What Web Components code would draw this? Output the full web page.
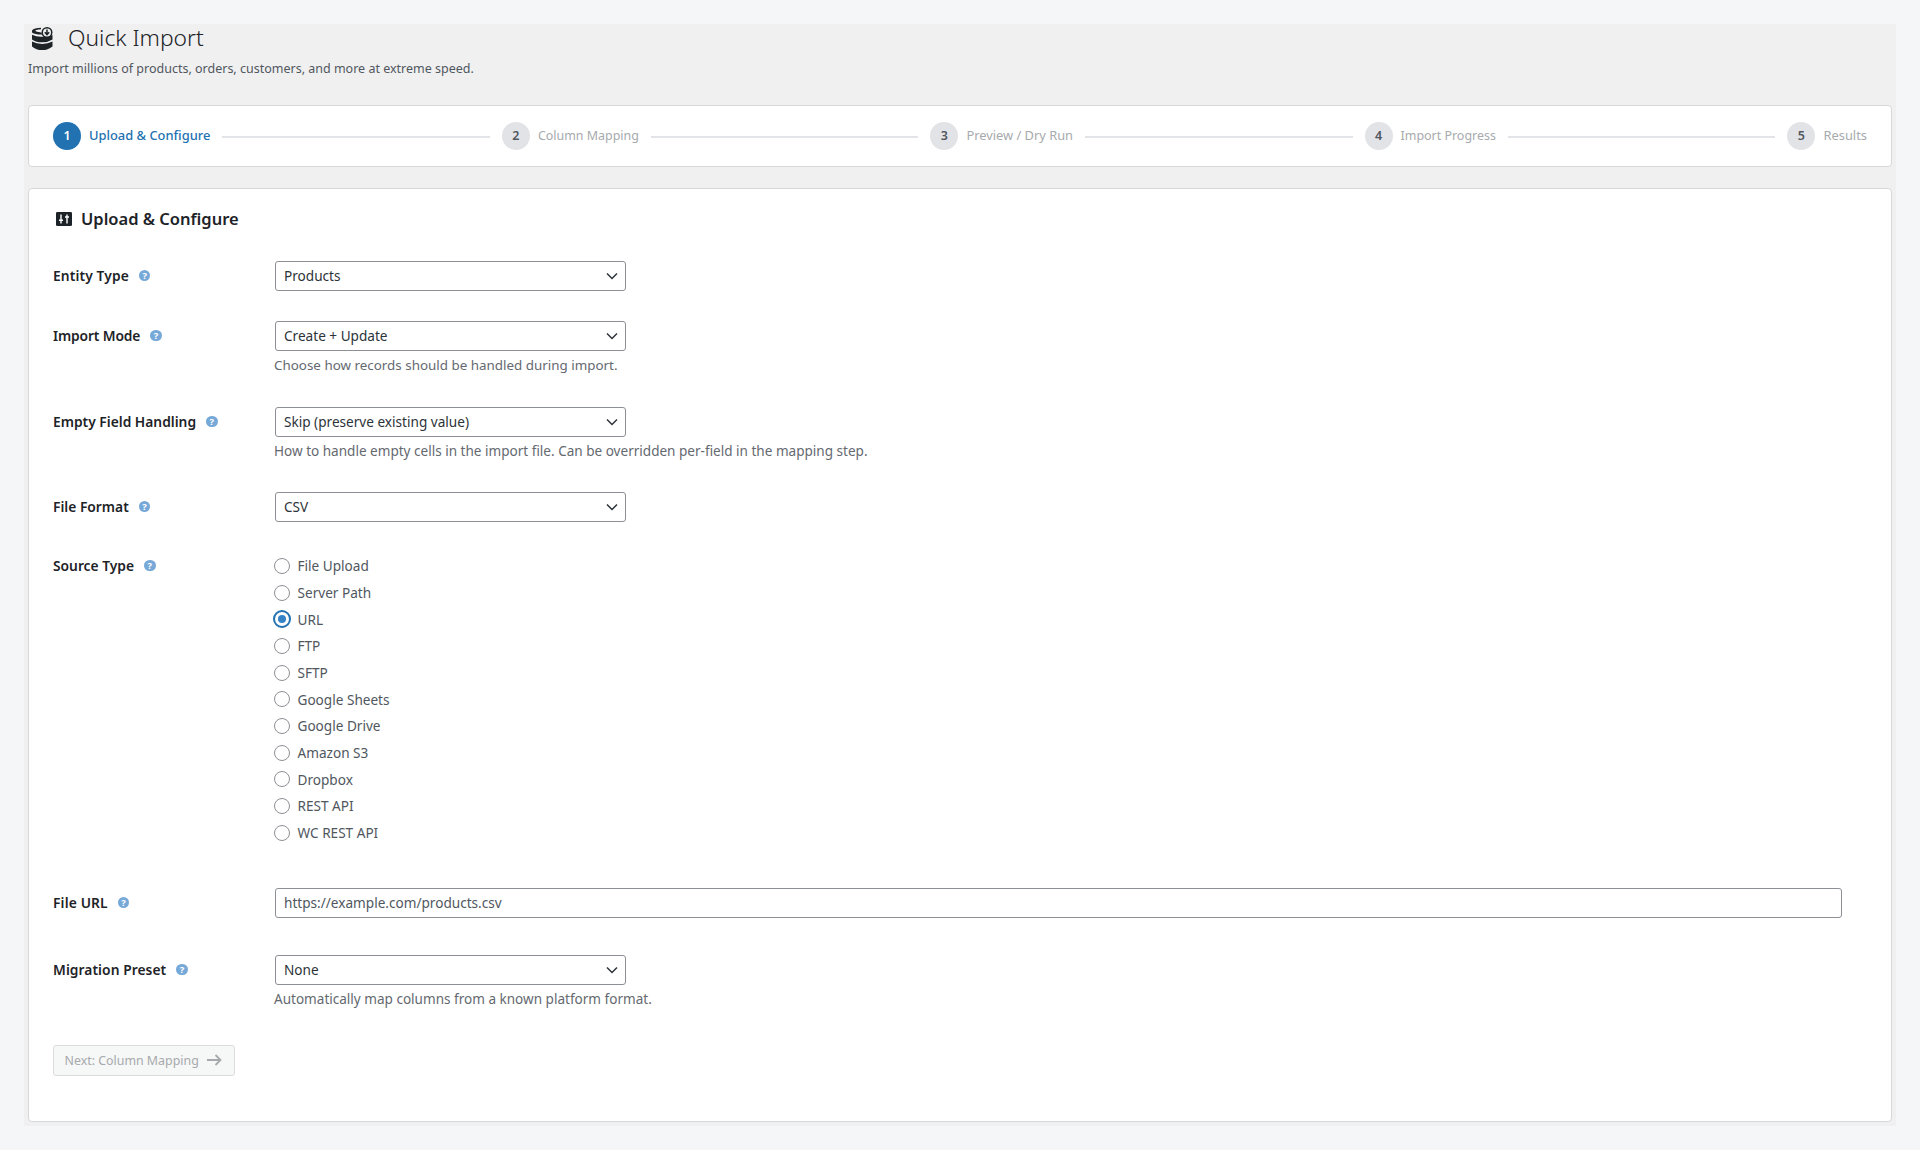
<!DOCTYPE html><html lang="en"><head><meta charset="utf-8"><title>Quick Import</title><style>
html,body{margin:0;padding:0;background:#f5f6f8;font-family:"Noto Sans",sans-serif;color:#1d2327}
body{height:1150px;overflow:hidden}
</style></head><body>
<qi-page>
  <qi-header slot="header" title="Quick Import" sub="Import millions of products, orders, customers, and more at extreme speed."></qi-header>
  <qi-stepper>
    <qi-step num="1" active>Upload &amp; Configure</qi-step>
    <qi-step num="2" style="--fs:12.45px">Column Mapping</qi-step>
    <qi-step num="3" style="--fs:12.85px">Preview / Dry Run</qi-step>
    <qi-step num="4" style="--fs:12.45px">Import Progress</qi-step>
    <qi-step num="5" style="--fs:12.9px">Results</qi-step>
  </qi-stepper>
  <qi-card heading="Upload &amp; Configure">
    <qi-row label="Entity Type" style="--ls:.12px"><qi-select>Products</qi-select></qi-row>
    <qi-row label="Import Mode" style="--after:33px;--ls:-.13px"><qi-select>Create + Update</qi-select><qi-note style="--fs:13.4px">Choose how records should be handled during import.</qi-note></qi-row>
    <qi-row label="Empty Field Handling" style="--after:32px"><qi-select>Skip (preserve existing value)</qi-select><qi-note>How to handle empty cells in the import file. Can be overridden per-field in the mapping step.</qi-note></qi-row>
    <qi-row label="File Format" style="--after:30.67px"><qi-select>CSV</qi-select></qi-row>
    <qi-row label="Source Type" style="--after:42px;--lh:26.67px">
      <qi-radio>File Upload</qi-radio>
      <qi-radio>Server Path</qi-radio>
      <qi-radio checked>URL</qi-radio>
      <qi-radio>FTP</qi-radio>
      <qi-radio>SFTP</qi-radio>
      <qi-radio>Google Sheets</qi-radio>
      <qi-radio>Google Drive</qi-radio>
      <qi-radio>Amazon S3</qi-radio>
      <qi-radio>Dropbox</qi-radio>
      <qi-radio>REST API</qi-radio>
      <qi-radio>WC REST API</qi-radio>
    </qi-row>
    <qi-row label="File URL" style="--after:37px;--ls:.15px"><qi-input>https://example.com/products.csv</qi-input></qi-row>
    <qi-row label="Migration Preset" style="--after:37px;--ls:.06px"><qi-select>None</qi-select><qi-note>Automatically map columns from a known platform format.</qi-note></qi-row>
    <qi-button>Next: Column Mapping</qi-button>
  </qi-card>
</qi-page>
<script>
function def(name,html){customElements.define(name,class extends HTMLElement{connectedCallback(){if(this.shadowRoot)return;const r=this.attachShadow({mode:'open'});r.innerHTML=typeof html==='function'?html(this):html;}});}
def('qi-page',`<style>:host{display:block;margin:24px 24px 0;height:1102px;background:#f0f0f1;padding:0 4px;box-sizing:border-box}</style><slot name="header"></slot><slot></slot>`);
def('qi-header',h=>`<style>
:host{display:block;height:81px}
.t{display:flex;align-items:center;height:28px;margin-left:4px;gap:15px}
svg{width:21px;height:23px;flex:none}
h1{margin:0;font-size:22.8px;font-weight:300;line-height:28px;color:#1d2327}
p{margin:8px 0 0;font-size:12.5px;line-height:18px;color:#50575e}
</style>
<div class="t"><svg viewBox="0 0 21 23"><g fill="#1d2327"><path d="M0 3.4Q2 1.2 9 .8V2.2Q4 2.6 3.2 3.8Q4 5 9 5.400L10.600 7.500Q3.500 7.800 0 5.400Z"/><path d="M0 7.800Q5 10.200 11 9.700Q16.500 10.500 20.500 8V12.400Q16 15.300 10.200 15.300Q4 15.300 0 12.400Z"/><path d="M0 14.600Q4.500 17 10.200 17Q16 17 20.500 14.600V19.400Q16 23 10.200 23Q4 23 0 19.400Z"/></g><circle cx="15" cy="5.500" r="5.500" fill="#1d2327"/><circle cx="15" cy="5.500" r="4" fill="#f0f0f1"/><path d="M15 2.400v5.200M12.800 5.300l2.200 2.300 2.200-2.300" fill="none" stroke="#1d2327" stroke-width="1.500"/></svg><h1>${h.getAttribute('title')}</h1></div>
<p>${h.getAttribute('sub')}</p>`);
def('qi-stepper',`<style>
:host{display:flex;align-items:center;height:62px;box-sizing:border-box;padding:0 24px;background:#fff;border:1px solid #d6d7d9;border-radius:4px;margin-bottom:21px}
::slotted(qi-step:not(:last-child)){flex:1 1 auto}
</style><slot></slot>`);
def('qi-step',h=>{const a=h.hasAttribute('active');const last=!h.nextElementSibling;return `<style>
:host{display:flex;align-items:center}
.n{width:28px;height:28px;border-radius:50%;flex:none;display:flex;align-items:center;justify-content:center;font-size:12.5px;font-weight:600;background:${a?'#2271b1':'#e2e3e6'};color:${a?'#fff':'#50575e'}}
.n b{font-weight:600;margin-top:-1px}
.l{margin-left:8px;padding-bottom:2px;white-space:nowrap;font-size:var(--fs,12.9px);font-weight:${a?500:400};color:${a?'#2271b1':'#a7aaad'}}
.x{flex:1;height:2px;background:#e2e4e7;margin:1px 12px 0;${last?'display:none':''}}
</style><span class="n"><b>${h.getAttribute('num')}</b></span><span class="l"><slot></slot></span><span class="x"></span>`});
def('qi-card',h=>`<style>
:host{display:block;background:#fff;border:1px solid #d6d7d9;border-radius:4px;padding:18px 24px 45px;height:934px;box-sizing:border-box}
.h{display:flex;align-items:center;height:24px;margin-bottom:30px;gap:9px;font-size:16.5px;font-weight:600;color:#1d2327}
.h span{padding-bottom:2px}
svg{width:16px;height:14px;margin-left:3px;flex:none}
</style><div class="h"><svg viewBox="0 0 16 14"><rect width="16" height="14" rx="1.2" fill="#1d2327"/><path d="M5 2.500v9M3 8.300h4M11 2.500v9M9 5h4" fill="none" stroke="#fff" stroke-width="1.400"/></svg><span>${h.getAttribute('heading')}</span></div><slot></slot>`);
def('qi-row',h=>`<style>
:host{display:grid;grid-template-columns:221px 1fr;margin-bottom:var(--after,30px)}
.l{font-size:13.8px;font-weight:600;letter-spacing:var(--ls,0);line-height:var(--lh,30px);color:#1d2327;display:flex;align-items:center;height:var(--lh,30px);white-space:nowrap}
.c{min-width:0}
</style><div class="l">${h.getAttribute('label')}<qi-help></qi-help></div><div class="c"><slot></slot></div>`);
def('qi-help',`<style>
:host{display:flex;width:11.500px;height:11.500px;border-radius:50%;background:#76a8d8;color:#fff;font-size:9.500px;font-weight:700;line-height:11px;letter-spacing:0;align-items:center;justify-content:center;margin:-1px 0 0 10px}
</style>?`);
const ctl=`:host{display:flex;align-items:center;box-sizing:border-box;height:30px;margin-left:1px;padding:0 8px;background:#fff;border:1px solid #8c8f94;border-radius:3px;font-size:13.6px;color:#2c3338}`;
def('qi-select',`<style>${ctl}:host{width:351px}span{flex:1;white-space:nowrap;padding-bottom:1px}svg{width:12px;height:8px;margin-right:-1px;flex:none}</style><span><slot></slot></span><svg viewBox="0 0 12 8"><path d="M1 1.5 6 6.5 11 1.5" fill="none" stroke="#2c3338" stroke-width="1.5"/></svg>`);
def('qi-input',`<style>${ctl}:host{width:1567px;color:#50575e}</style><slot></slot>`);
def('qi-note',`<style>:host{display:block;margin-top:5px;font-size:var(--fs,13.55px);line-height:18px;color:#646970;white-space:nowrap}</style><slot></slot>`);
def('qi-radio',h=>{const c=h.hasAttribute('checked');return `<style>
:host{display:flex;align-items:center;height:26.67px;font-size:13.6px;color:#50575e;white-space:nowrap}
.r{box-sizing:border-box;width:16px;height:16px;border-radius:50%;border:1px solid #8c8f94;background:#fff;margin-right:7.5px;flex:none;display:flex;align-items:center;justify-content:center}
.r.on{border:2px solid #2271b1;width:18px;height:18px;margin:0 6.5px 0 -1px}
.r.on i{width:8px;height:8px;border-radius:50%;background:#3582c4}
</style><span class="r ${c?'on':''}">${c?'<i></i>':''}</span><slot></slot>`});
def('qi-button',`<style>
:host{display:inline-flex;align-items:center;box-sizing:border-box;height:31px;width:182px;padding:0 12px 0 10.5px;gap:8px;background:#f6f7f7;border:1px solid #dcdcde;border-radius:3px;font-size:12.4px;color:#a7aaad;white-space:nowrap}
svg{width:15px;height:12px;flex:none}
</style><slot></slot><svg viewBox="0 0 15 12"><path d="M0 6h13.5M8.5 1l5 5-5 5" fill="none" stroke="#a7aaad" stroke-width="1.8"/></svg>`);
</script></body></html>
